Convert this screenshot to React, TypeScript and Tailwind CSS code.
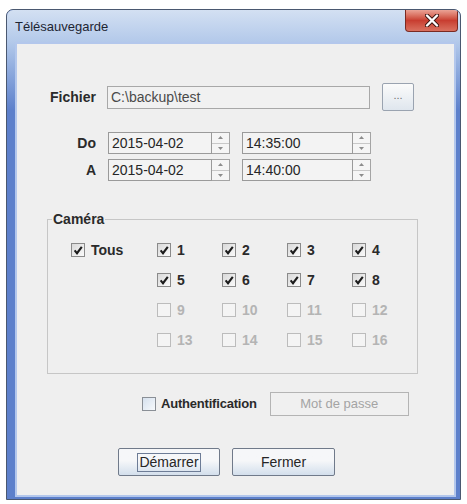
import React from 'react';

type BoxProps = { checked?: boolean; disabled?: boolean; tint?: boolean };

function Box({ checked = false, disabled = false, tint = false }: BoxProps) {
  const tone = disabled
    ? 'border-[#bcbcbc] bg-[#f4f4f4]'
    : tint
      ? 'border-[#8a8f96] bg-linear-to-br from-[#d6e1ee] to-[#f6f9fc]'
      : 'border-[#8a8a8a] bg-linear-to-br from-[#d9d9d9] to-[#fafafa]';
  return (
    <span className={`flex h-[14px] w-[14px] shrink-0 items-center justify-center border ${tone}`}>
      {checked && (
        <svg width="10" height="10" viewBox="0 0 10 10">
          <path d="M1.6 5.4 L4 8.2 L8.8 1.8" fill="none" stroke="#1c1c1c" strokeWidth="2.1" />
        </svg>
      )}
    </span>
  );
}

function CamItem({ label, checked = false, disabled = false }: { label: string; checked?: boolean; disabled?: boolean }) {
  return (
    <div className="flex h-[30px] items-center gap-[6px]">
      <Box checked={checked} disabled={disabled} />
      <span className={`text-[14px] font-bold ${disabled ? 'text-[#b4b4b4]' : 'text-[#2a2a2a]'}`}>{label}</span>
    </div>
  );
}

function Spinner() {
  return (
    <div className="flex h-full w-[18px] flex-col border border-l-0 border-[#a4a4a4]">
      <div className="flex flex-1 items-center justify-center border-b border-[#c8c8c8] bg-[#f5f5f5]">
        <svg width="5" height="3" viewBox="0 0 5 3">
          <path d="M0 3 L2.5 0 L5 3Z" fill="#8c8c8c" />
        </svg>
      </div>
      <div className="flex flex-1 items-center justify-center bg-[#f5f5f5]">
        <svg width="5" height="3" viewBox="0 0 5 3">
          <path d="M0 0 L2.5 3 L5 0Z" fill="#8c8c8c" />
        </svg>
      </div>
    </div>
  );
}

function SpinField({ value, wide }: { value: string; wide?: boolean }) {
  return (
    <div className="flex h-[22px]">
      <div
        className={`flex items-center border border-[#9a9a9a] bg-[#f3f3f3] pl-[3px] text-[14px] text-[#262626] ${
          wide ? 'w-[111px]' : 'w-[104px]'
        }`}
      >
        {value}
      </div>
      <Spinner />
    </div>
  );
}

function DateRow({ label, date, time }: { label: string; date: string; time: string }) {
  return (
    <div className="flex h-[22px] items-center">
      <span className="w-[58px] pr-[12px] text-right text-[14px] font-bold text-[#2a2a2a]">{label}</span>
      <SpinField value={date} />
      <div className="w-[12px]" />
      <SpinField value={time} wide />
    </div>
  );
}

export default function App() {
  const cams = Array.from({ length: 16 }, (_, i) => i + 1);

  return (
    <div className="h-[504px] w-[467px] bg-white pl-[6px] pt-[9px] font-['Liberation_Sans',Arial,sans-serif]">
      <div className="flex h-[491px] w-[455px] flex-col overflow-hidden rounded-t-[7px] border border-[#4a5870] bg-[#5d80cb]">
        {/* title bar */}
        <div className="flex h-[32px] shrink-0 items-start justify-between bg-linear-to-b from-[#d3e0f2] to-[#b3c9ea] pl-[8px] pr-[4px]">
          <span className="mt-[7px] text-[13px] text-[#1d2533]">Télésauvegarde</span>
          <div className="mr-[-2px] flex h-[22px] w-[53px] items-center justify-center rounded-b-[4px] border border-t-0 border-[#7a2a22] bg-linear-to-b from-[#eaa396] via-[#c83d30] to-[#d9705f]">
            <svg width="14" height="13" viewBox="0 0 14 13">
              <path d="M2 1.5 L12 11.5 M12 1.5 L2 11.5" stroke="#3a1410" strokeWidth="4.2" strokeLinecap="round" />
              <path d="M2 1.5 L12 11.5 M12 1.5 L2 11.5" stroke="#ffffff" strokeWidth="2.4" strokeLinecap="round" />
            </svg>
          </div>
        </div>

        {/* frame around client */}
        <div className="flex flex-1 flex-col bg-linear-to-b from-[#b3c9ea] to-[#5d80cb] to-[15%] pb-[2px] pl-[8px] pr-[4px]">
          <div className="flex flex-1 flex-col border-2 border-[#b3c7ec] bg-[#efefef]">
            {/* file row */}
            <div className="ml-[33px] mt-[39px] flex h-[28px] items-center">
              <span className="w-[57px] text-[14px] font-bold text-[#2a2a2a]">Fichier</span>
              <div className="flex h-[23px] w-[263px] items-center border border-[#a8a8a8] bg-[#f1f1f1] pl-[3px] text-[14px] text-[#4a4a4a]">
                {'C:\\backup\\test'}
              </div>
              <button className="ml-[12px] flex h-[28px] w-[32px] items-center justify-center rounded-[2px] border border-[#9aa3b0] bg-linear-to-b from-[#fbfbfb] to-[#dfe6ee] pb-[4px] text-[11px] leading-none text-[#707070]">
                ...
              </button>
            </div>

            {/* date rows */}
            <div className="ml-[33px] mt-[21px] flex flex-col gap-[5px]">
              <DateRow label="Do" date="2015-04-02" time="14:35:00" />
              <DateRow label="A" date="2015-04-02" time="14:40:00" />
            </div>

            {/* camera group */}
            <fieldset className="ml-[30px] mt-[30px] w-[365px] border border-[#c6c6c6] pb-[18px]">
              <legend className="ml-[4px] px-[1px] text-[14px] font-bold leading-[16px] text-[#2a2a2a]">Caméra</legend>
              <div className="grid grid-cols-[86px_65px_65px_65px_65px] pl-[23px] pt-[8px]">
                <div className="row-span-4">
                  <CamItem label="Tous" checked />
                </div>
                {cams.map((n) => (
                  <CamItem key={n} label={String(n)} checked={n <= 8} disabled={n > 8} />
                ))}
              </div>
            </fieldset>

            {/* auth row */}
            <div className="ml-[125px] mt-[18px] flex h-[24px] items-center">
              <Box tint />
              <span className="ml-[5px] text-[13px] font-bold tracking-[-0.2px] text-[#2a2a2a]">Authentification</span>
              <div className="ml-[13px] flex h-[24px] w-[139px] items-center justify-center border border-[#b4b4b4] bg-[#f0f0f0] text-[13px] text-[#a4a4a4]">
                Mot de passe
              </div>
            </div>

            {/* buttons */}
            <div className="ml-[101px] mt-[32px] flex gap-[12px]">
              <button className="flex h-[28px] w-[102px] items-center justify-center rounded-[2px] border border-[#707a8a] bg-linear-to-b from-[#f6f7f9] from-[45%] to-[#d3dfec] text-[14px] text-[#262626]">
                <span className="border border-[#6d7c96] px-[1px] leading-[17px]">Démarrer</span>
              </button>
              <button className="flex h-[28px] w-[103px] items-center justify-center rounded-[2px] border border-[#707a8a] bg-linear-to-b from-[#f6f7f9] from-[45%] to-[#d3dfec] text-[14px] text-[#262626]">
                Fermer
              </button>
            </div>
          </div>
        </div>
      </div>
    </div>
  );
}
